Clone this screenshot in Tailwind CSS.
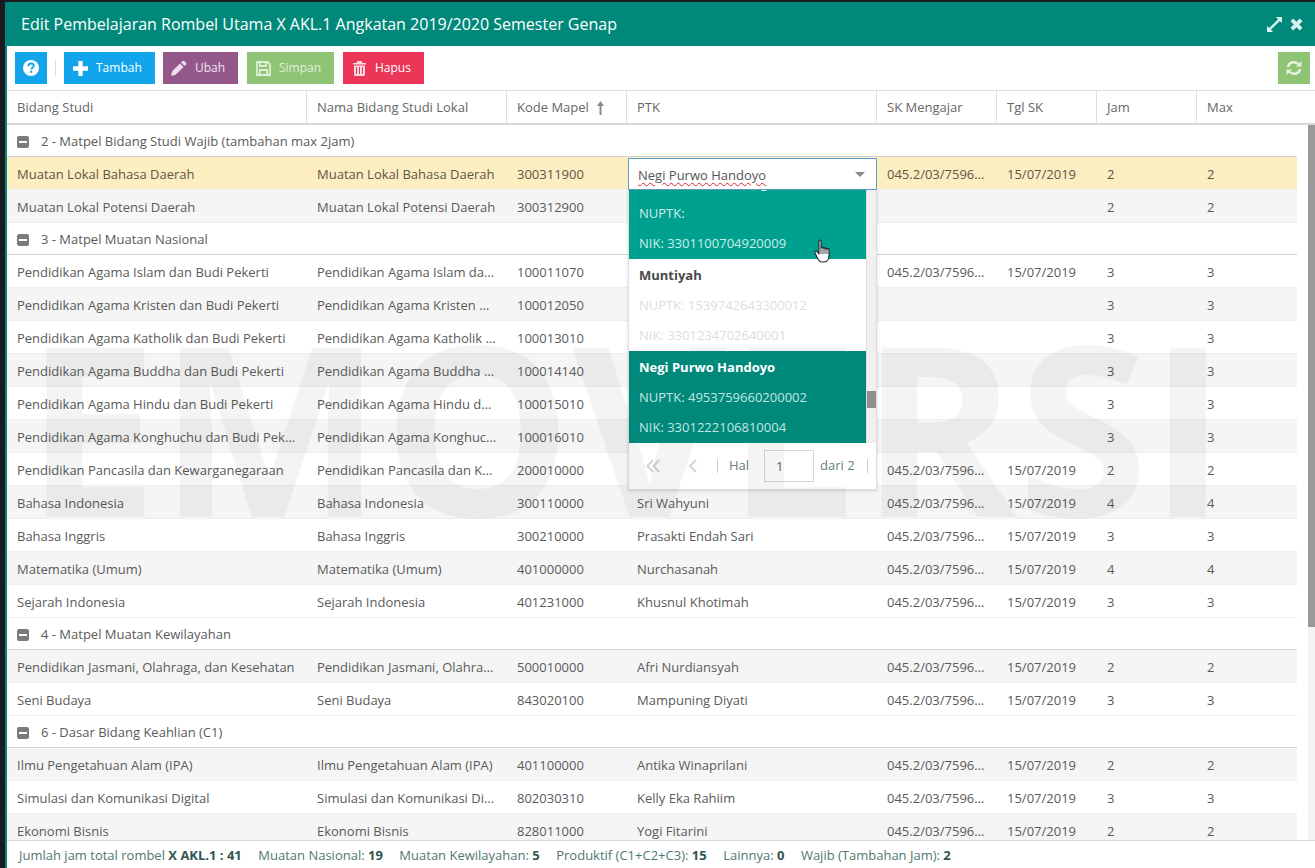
<!DOCTYPE html>
<html lang="en">
<head>
  <meta charset="UTF-8" />
  <meta name="viewport" content="width=device-width, initial-scale=1.0" />
  <title>Edit Pembelajaran Rombel</title>
  <script src="https://cdn.jsdelivr.net/npm/@tailwindcss/browser@4"></script>
</head>
<body class="bg-[#1b1a1f] overflow-hidden font-['Open_Sans',sans-serif] text-[13px] text-[#5a5a5a]">
  <div class="h-[868px] pt-[2px] pl-[5px]">
    <div class="relative h-full flex flex-col bg-white overflow-hidden">

      <!-- title bar -->
      <div class="h-[44px] shrink-0 bg-[#00897b] flex items-center justify-between pl-[16px] pr-[12px] text-white">
        <span class="text-[16px]">Edit Pembelajaran Rombel Utama X AKL.1 Angkatan 2019/2020 Semester Genap</span>
        <div class="flex items-center gap-[8px] text-[#d9f2ef]">
          <svg class="w-[15px] h-[15px]" viewBox="0 0 16 16" fill="currentColor"><path d="M9.5 0H16v6.5l-2.3-2.3-9.5 9.5L6.5 16H0V9.500l2.300 2.300 9.500-9.500z"/></svg>
          <svg class="w-[13px] h-[13px]" viewBox="0 0 14 14" fill="none" stroke="currentColor" stroke-width="4"><path d="M2 2l10 10M12 2L2 12"/></svg>
        </div>
      </div>

      <div class="flex-1 flex flex-col min-h-0 border-l-2 border-[#00897b]">
        <!-- toolbar -->
        <div class="h-[44px] shrink-0 flex items-center pl-[8px] pr-[5px] text-xs text-white">
          <button class="w-[32px] h-[32px] bg-[#12a5ec] flex items-center justify-center">
            <svg class="w-[16px] h-[16px]" viewBox="0 0 16 16"><circle cx="8" cy="8" r="8" fill="#fff"/><path d="M5.300 6.200c0-1.700 1.200-2.700 2.800-2.700s2.700 1 2.700 2.300c0 1.800-2.300 1.800-2.300 3.600" fill="none" stroke="#12a5ec" stroke-width="1.900"/><rect x="7.100" y="10.800" width="2" height="2" fill="#12a5ec"/></svg>
          </button>
          <span class="ml-[8px] mr-[8px] w-px h-[16px] bg-[#dddddd]"></span>
          <button class="w-[91px] h-[32px] bg-[#12a5ec] flex items-center pl-[9px] gap-[8px]">
            <svg class="w-[15px] h-[15px]" viewBox="0 0 14 14" fill="#fff"><path d="M5 0h4v5h5v4H9v5H5V9H0V5h5z"/></svg>
            <span>Tambah</span>
          </button>
          <button class="ml-[8px] w-[75px] h-[32px] bg-[#94578a] flex items-center pl-[8px] gap-[8px] text-[#f1e4ef]">
            <svg class="w-[16px] h-[16px]" viewBox="0 0 16 16" fill="#eedfeb"><path d="M11.200 1.200c.7-.7 1.600-.7 2.200 0l1.400 1.400c.6.6.6 1.500 0 2.200L13.500 6 10 2.500zM9 3.500L12.500 7l-7.800 7.800L0 16l1.200-4.700z"/></svg>
            <span>Ubah</span>
          </button>
          <button class="ml-[9px] w-[87px] h-[32px] bg-[#8fc476] flex items-center pl-[9px] gap-[8px] text-[#dff0d6]">
            <svg class="w-[15px] h-[15px]" viewBox="0 0 15 15" fill="none" stroke="#dff0d6" stroke-width="1.800"><path d="M1 1h10.500L14 3.500V14H1z"/><path d="M4 1.500v3.500h6V1.500M3.800 14V9h7.400v5"/></svg>
            <span>Simpan</span>
          </button>
          <button class="ml-[9px] w-[81px] h-[32px] bg-[#ec3657] flex items-center pl-[10px] gap-[9px]">
            <svg class="w-[13px] h-[15px]" viewBox="0 0 13 15" fill="#f9dbe1"><path d="M4.500 0h4l1 2H13v1.500H0V2h3.500zM1 4.500h11V13.500c0 .9-.6 1.500-1.400 1.500H2.400c-.8 0-1.400-.6-1.400-1.500z"/><path d="M3.500 6v7M6.500 6v7M9.500 6v7" stroke="#ec3657" stroke-width="1"/></svg>
            <span>Hapus</span>
          </button>
          <button class="ml-auto w-[32px] h-[32px] bg-[#8fc476] flex items-center justify-center">
            <svg class="w-[16px] h-[16px]" viewBox="0 0 16 16" fill="none" stroke="#e6f3df" stroke-width="2.400"><path d="M2 7c.5-3 3-4.800 6-4.800 1.800 0 3.300.8 4.300 2M14 9c-.5 3-3 4.800-6 4.800-1.800 0-3.300-.8-4.300-2"/><path d="M15.500 1v5.500H10zM.5 15V9.500H6z" fill="#e6f3df" stroke="none"/></svg>
          </button>
        </div>

        <!-- column header -->
        <table class="w-full shrink-0 table-fixed border-separate border-spacing-0 border-t border-[#dddddd] text-[#666666] [&_th]:font-normal [&_th]:text-left [&_th]:px-[10px] [&_th]:pt-[2px] [&_th]:h-[34px] [&_th]:border-b-[2px] [&_th]:border-b-[#d8d8d4] [&_th]:border-r [&_th]:border-r-[#dddddd]">
          <colgroup>
            <col class="w-[300px]"><col class="w-[200px]"><col class="w-[120px]"><col class="w-[250px]"><col class="w-[120px]"><col class="w-[100px]"><col class="w-[100px]"><col>
          </colgroup>
          <thead>
            <tr>
              <th>Bidang Studi</th>
              <th>Nama Bidang Studi Lokal</th>
              <th>
                <span class="flex items-center gap-[8px]">Kode Mapel
                  <svg class="w-[7px] h-[14px]" viewBox="0 0 7 14" fill="#8a8a8a"><path d="M3.500 0L7 5H4.500v9h-2V5H0z"/></svg>
                </span>
              </th>
              <th>PTK</th>
              <th>SK Mengajar</th>
              <th>Tgl SK</th>
              <th>Jam</th>
              <th class="!border-r-0">Max</th>
            </tr>
          </thead>
        </table>

        <!-- body with scrollbar -->
        <div class="flex-1 min-h-0 flex overflow-hidden">
          <div class="relative w-[1290px] shrink-0">
            <table class="w-[1290px] table-fixed border-separate border-spacing-0 [&_td]:h-[33px] [&_td]:px-[10px] [&_td]:pt-[4px] [&_td]:truncate [&_td]:border-b [&_td]:border-[#eeeeee] [&_.grp_td]:h-[32px] [&_.grp_td]:pt-[2px] [&_.grp_td]:border-[#d2d2d2] [&_.alt_td]:bg-[#f5f5f5]">
              <colgroup>
                <col class="w-[300px]"><col class="w-[200px]"><col class="w-[120px]"><col class="w-[250px]"><col class="w-[120px]"><col class="w-[100px]"><col class="w-[100px]"><col class="w-[100px]">
              </colgroup>
              <tbody>
                <tr class="grp"><td colspan="8"><span class="flex items-center gap-[12px]"><span class="relative w-[12px] h-[12px] rounded-[2px] bg-[#7b7b7b] flex items-center justify-center"><span class="w-[8px] h-[2px] bg-white"></span></span>2 - Matpel Bidang Studi Wajib (tambahan max 2jam)</span></td></tr>
                <tr class="[&_td]:bg-[#fdeec2] text-[#5d5647]"><td>Muatan Lokal Bahasa Daerah</td><td>Muatan Lokal Bahasa Daerah</td><td>300311900</td><td></td><td>045.2/03/7596/2019</td><td>15/07/2019</td><td>2</td><td>2</td></tr>
                <tr class="alt"><td>Muatan Lokal Potensi Daerah</td><td>Muatan Lokal Potensi Daerah</td><td>300312900</td><td></td><td></td><td></td><td>2</td><td>2</td></tr>
                <tr class="grp"><td colspan="8"><span class="flex items-center gap-[12px]"><span class="relative w-[12px] h-[12px] rounded-[2px] bg-[#7b7b7b] flex items-center justify-center"><span class="w-[8px] h-[2px] bg-white"></span></span>3 - Matpel Muatan Nasional</span></td></tr>
                <tr><td>Pendidikan Agama Islam dan Budi Pekerti</td><td>Pendidikan Agama Islam dan Budi Pekerti</td><td>100011070</td><td></td><td>045.2/03/7596/2019</td><td>15/07/2019</td><td>3</td><td>3</td></tr>
                <tr class="alt"><td>Pendidikan Agama Kristen dan Budi Pekerti</td><td>Pendidikan Agama Kristen dan Budi Pekerti</td><td>100012050</td><td></td><td></td><td></td><td>3</td><td>3</td></tr>
                <tr><td>Pendidikan Agama Katholik dan Budi Pekerti</td><td>Pendidikan Agama Katholik dan Budi Pekerti</td><td>100013010</td><td></td><td></td><td></td><td>3</td><td>3</td></tr>
                <tr class="alt"><td>Pendidikan Agama Buddha dan Budi Pekerti</td><td>Pendidikan Agama Buddha dan Budi Pekerti</td><td>100014140</td><td></td><td></td><td></td><td>3</td><td>3</td></tr>
                <tr><td>Pendidikan Agama Hindu dan Budi Pekerti</td><td>Pendidikan Agama Hindu dan Budi Pekerti</td><td>100015010</td><td></td><td></td><td></td><td>3</td><td>3</td></tr>
                <tr class="alt"><td>Pendidikan Agama Konghuchu dan Budi Pekerti</td><td>Pendidikan Agama Konghuchu dan Budi Pekerti</td><td>100016010</td><td></td><td></td><td></td><td>3</td><td>3</td></tr>
                <tr><td>Pendidikan Pancasila dan Kewarganegaraan</td><td>Pendidikan Pancasila dan Kewarganegaraan</td><td>200010000</td><td></td><td>045.2/03/7596/2019</td><td>15/07/2019</td><td>2</td><td>2</td></tr>
                <tr class="alt"><td>Bahasa Indonesia</td><td>Bahasa Indonesia</td><td>300110000</td><td>Sri Wahyuni</td><td>045.2/03/7596/2019</td><td>15/07/2019</td><td>4</td><td>4</td></tr>
                <tr><td>Bahasa Inggris</td><td>Bahasa Inggris</td><td>300210000</td><td>Prasakti Endah Sari</td><td>045.2/03/7596/2019</td><td>15/07/2019</td><td>3</td><td>3</td></tr>
                <tr class="alt"><td>Matematika (Umum)</td><td>Matematika (Umum)</td><td>401000000</td><td>Nurchasanah</td><td>045.2/03/7596/2019</td><td>15/07/2019</td><td>4</td><td>4</td></tr>
                <tr><td>Sejarah Indonesia</td><td>Sejarah Indonesia</td><td>401231000</td><td>Khusnul Khotimah</td><td>045.2/03/7596/2019</td><td>15/07/2019</td><td>3</td><td>3</td></tr>
                <tr class="grp"><td colspan="8"><span class="flex items-center gap-[12px]"><span class="relative w-[12px] h-[12px] rounded-[2px] bg-[#7b7b7b] flex items-center justify-center"><span class="w-[8px] h-[2px] bg-white"></span></span>4 - Matpel Muatan Kewilayahan</span></td></tr>
                <tr class="alt"><td>Pendidikan Jasmani, Olahraga, dan Kesehatan</td><td>Pendidikan Jasmani, Olahraga, dan Kesehatan</td><td>500010000</td><td>Afri Nurdiansyah</td><td>045.2/03/7596/2019</td><td>15/07/2019</td><td>2</td><td>2</td></tr>
                <tr><td>Seni Budaya</td><td>Seni Budaya</td><td>843020100</td><td>Mampuning Diyati</td><td>045.2/03/7596/2019</td><td>15/07/2019</td><td>3</td><td>3</td></tr>
                <tr class="grp"><td colspan="8"><span class="flex items-center gap-[12px]"><span class="relative w-[12px] h-[12px] rounded-[2px] bg-[#7b7b7b] flex items-center justify-center"><span class="w-[8px] h-[2px] bg-white"></span></span>6 - Dasar Bidang Keahlian (C1)</span></td></tr>
                <tr class="alt"><td>Ilmu Pengetahuan Alam (IPA)</td><td>Ilmu Pengetahuan Alam (IPA)</td><td>401100000</td><td>Antika Winaprilani</td><td>045.2/03/7596/2019</td><td>15/07/2019</td><td>2</td><td>2</td></tr>
                <tr><td>Simulasi dan Komunikasi Digital</td><td>Simulasi dan Komunikasi Digital</td><td>802030310</td><td>Kelly Eka Rahiim</td><td>045.2/03/7596/2019</td><td>15/07/2019</td><td>3</td><td>3</td></tr>
                <tr class="alt"><td>Ekonomi Bisnis</td><td>Ekonomi Bisnis</td><td>828011000</td><td>Yogi Fitarini</td><td>045.2/03/7596/2019</td><td>15/07/2019</td><td>2</td><td>2</td></tr>
              </tbody>
            </table>

            <!-- open PTK combobox -->
            <div class="absolute left-[621px] top-[33px] w-[249px]">
              <div class="h-[32px] bg-white border border-[#5f9fc4] flex items-center justify-between pl-[9px] pr-[11px] pt-[3px]">
                <span class="text-[#555555] underline decoration-wavy decoration-[#e0202c] decoration-1 underline-offset-2">Negi Purwo Handoyo</span>
                <span class="w-0 h-0 -mt-[3px] border-x-[5px] border-x-transparent border-t-[5px] border-t-[#888888]"></span>
              </div>
              <div class="bg-white border border-t-0 border-[#dddddd] shadow-[0_1px_3px_rgba(0,0,0,0.15)]">
                <div class="flex h-[253px]">
                  <div class="w-[237px] overflow-hidden [&_p]:h-[30px] [&_p]:leading-[30px] [&_p]:pl-[10px]">
                    <div class="relative z-10 -mt-[23px] py-px bg-[#00a08f] text-[#cdeee9]">
                      <p class="font-bold text-white">Muhammad Ali Nugroho</p>
                      <p>NUPTK:</p>
                      <p>NIK: 3301100704920009</p>
                    </div>
                    <div class="py-px text-[#dddddd]">
                      <p class="font-bold text-[#4a4a4a]">Muntiyah</p>
                      <p>NUPTK: 1539742643300012</p>
                      <p>NIK: 3301234702640001</p>
                    </div>
                    <div class="relative z-10 py-px bg-[#00897b] text-[#c4e6e2]">
                      <p class="font-bold text-white">Negi Purwo Handoyo</p>
                      <p>NUPTK: 4953759660200002</p>
                      <p>NIK: 3301222106810004</p>
                    </div>
                  </div>
                  <div class="flex-1 bg-[#f0f0f0] border-l border-[#e0e0e0] pt-[201px]">
                    <div class="h-[17px] bg-[#8f8f8f]"></div>
                  </div>
                </div>
                <div class="h-[46px] flex items-center text-[#5f7f7b]">
                  <svg class="ml-[17px] w-[14px] h-[14px]" viewBox="0 0 14 14" fill="none" stroke="#d4d4d4" stroke-width="2"><path d="M7 1L1.500 7 7 13M13 1L7.500 7l5.500 6"/></svg>
                  <svg class="ml-[28px] w-[9px] h-[14px]" viewBox="0 0 9 14" fill="none" stroke="#d4d4d4" stroke-width="2"><path d="M8 1L2 7l6 6"/></svg>
                  <span class="ml-[20px] w-px h-[14px] bg-[#cccccc]"></span>
                  <span class="ml-[11px]">Hal</span>
                  <span class="ml-[15px] w-[50px] h-[32px] border border-[#d5d5d5] flex items-center pl-[11px] pt-[2px] text-[#666666]">1</span>
                  <span class="ml-[6px]">dari 2</span>
                  <span class="ml-[12px] w-px h-[14px] bg-[#cccccc]"></span>
                </div>
              </div>
              <!-- mouse pointer -->
              <svg class="absolute z-20 left-[186px] top-[81px] w-[17px] h-[24px]" viewBox="0 0 17 24"><path d="M5 2c0-1.300 2-1.300 2 0v7c0-1.300 2-1.300 2 0v.5c0-1.200 2-1.200 2 0v.7c0-1.100 2-1.100 2 0 0-.8 2-.8 2 .5v5.800c0 3-1.500 6.500-5 6.500H8c-2.500 0-3.200-1.500-4-3L1 14c-.8-1.500 1-2.800 2-1.500l2 2.500z" fill="#ffffff" stroke="#222222" stroke-width="1.100" stroke-linejoin="round"/><path d="M7 9v6M9 9.500V15M11 10.200V15M13 10.500V15" stroke="#222222" stroke-width=".8"/></svg>
            </div>
          </div>

          <!-- page scrollbar -->
          <div class="ml-[11px] w-[7px] bg-[#f3f3f3]">
            <div class="h-[502px] bg-[#999999]"></div>
          </div>
        </div>

        <!-- footer totals -->
        <div class="h-[28px] shrink-0 border-t border-[#d8d8d8] bg-white flex items-center gap-[16.5px] pl-[12px] pt-[2px] text-[#4f7773] [&_b]:text-[#2f5552]">
          <span>Jumlah jam total rombel <b>X AKL.1 : 41</b></span>
          <span>Muatan Nasional: <b>19</b></span>
          <span>Muatan Kewilayahan: <b>5</b></span>
          <span>Produktif (C1+C2+C3): <b>15</b></span>
          <span>Lainnya: <b>0</b></span>
          <span>Wajib (Tambahan Jam): <b>2</b></span>
        </div>
      </div>

      <!-- watermark -->
      <div class="absolute left-[20px] top-[253px] whitespace-nowrap pointer-events-none font-bold text-[238px] leading-[340px] text-black/[0.045]">EMOVERSI</div>
    </div>
  </div>
</body>
</html>
